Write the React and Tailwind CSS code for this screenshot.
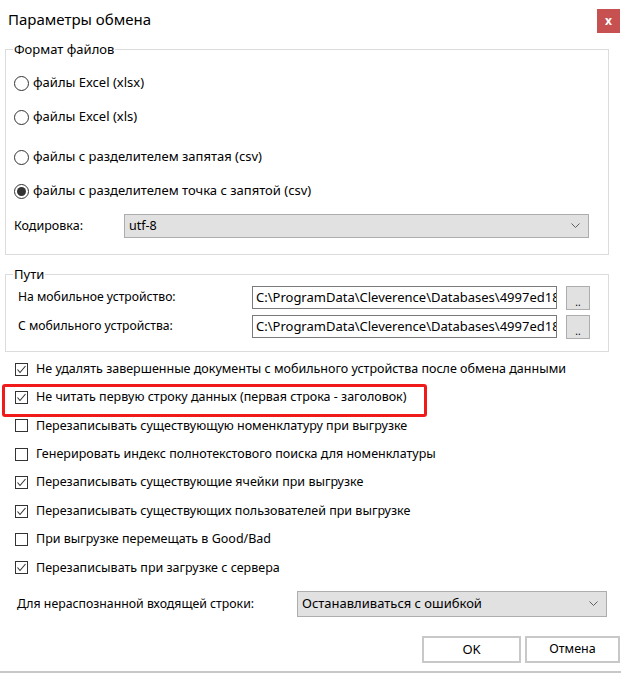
import React from "react";

const font = { fontFamily: '"Noto Sans", "DejaVu Sans", sans-serif' };

const Radio = ({ checked, label, className }) => (
    <div className={`flex items-center h-[20px] pl-[8px] ${className}`}>
        <span className="w-[15px] h-[15px] rounded-full border border-[#333333] bg-white flex items-center justify-center shrink-0">
            {checked && <span className="w-[9px] h-[9px] rounded-full bg-[#333333]" />}
        </span>
        <span className="ml-[4px] text-[13px] text-black">{label}</span>
    </div>
);

const Check = ({ checked, label }) => (
    <div className="flex items-center h-[28.4px] pl-[15px]">
        <span className="w-[13px] h-[13px] border border-[#333333] bg-white flex items-center justify-center shrink-0">
            {checked && (
                <svg width="11" height="11" viewBox="0 0 11 11">
                    <polyline points="1.5,5.5 4,8.5 9.5,2" fill="none" stroke="#333333" strokeWidth="1.1" />
                </svg>
            )}
        </span>
        <span className="ml-[8px] text-[12.5px] text-black whitespace-nowrap">{label}</span>
    </div>
);

const Chevron = () => (
    <svg width="9" height="6" viewBox="0 0 9 6">
        <polyline points="0.5,0.5 4.5,4.5 8.5,0.5" fill="none" stroke="#606060" strokeWidth="1" />
    </svg>
);

const PathRow = ({ label, className }) => (
    <div className={`flex items-center h-[23px] ${className}`}>
        <span className="w-[246px] pl-[12px] text-[12.2px] text-black">{label}</span>
        <div className="w-[305px] h-[23px] border border-[#7a7a7a] bg-white flex items-center pl-[3px]">
            <span className="block w-full overflow-hidden text-[13px] text-black whitespace-nowrap">
                C:\ProgramData\Cleverence\Databases\4997ed18
            </span>
        </div>
        <div className="ml-[9px] w-[24px] h-[24px] border border-[#adadad] bg-[#e1e1e1] flex items-end justify-center pb-[2px]">
            <span className="text-[10px] leading-[10px] text-black">..</span>
        </div>
    </div>
);

export default function App() {
    const checks = [
        { checked: true, label: "Не удалять завершенные документы с мобильного устройства после обмена данными" },
        { checked: true, label: "Не читать первую строку данных (первая строка - заголовок)" },
        { checked: false, label: "Перезаписывать существующую номенклатуру при выгрузке" },
        { checked: false, label: "Генерировать индекс полнотекстового поиска для номенклатуры" },
        { checked: true, label: "Перезаписывать существующие ячейки при выгрузке" },
        { checked: true, label: "Перезаписывать существующих пользователей при выгрузке" },
        { checked: false, label: "При выгрузке перемещать в Good/Bad" },
        { checked: true, label: "Перезаписывать при загрузке с сервера" },
    ];

    return (
        <div className="w-[621px] h-[673px] bg-white flex flex-col overflow-hidden" style={font}>
            {/* title bar */}
            <div className="h-[41px] flex justify-between shrink-0">
                <span className="pl-[8px] pt-[9px] text-[15px] leading-[20px] text-black">Параметры обмена</span>
                <div className="mt-[9px] mr-[1px] w-[23px] h-[24px] bg-[#c75050] flex items-center justify-center">
                    <span className="text-white text-[12px] font-bold leading-none">x</span>
                </div>
            </div>

            {/* format group */}
            <fieldset className="ml-[5px] w-[604px] h-[214px] border border-[#dcdcdc] shrink-0">
                <legend className="ml-[7px] px-[1px] text-[13px] leading-[16px] text-black">Формат файлов</legend>
                <Radio label="файлы Excel (xlsx)" className="mt-[16px]" />
                <Radio label="файлы Excel (xls)" className="mt-[14px]" />
                <Radio label="файлы с разделителем запятая (csv)" className="mt-[20px]" />
                <Radio checked label="файлы с разделителем точка с запятой (csv)" className="mt-[14px]" />
                <div className="flex items-center mt-[13px] pl-[8px]">
                    <span className="w-[110px] text-[12.5px] text-black">Кодировка:</span>
                    <div className="w-[465px] h-[24px] border border-[#adadad] bg-[#e1e1e1] flex items-center justify-between pl-[4px] pr-[8px]">
                        <span className="text-[12.5px] text-black">utf-8</span>
                        <Chevron />
                    </div>
                </div>
            </fieldset>

            {/* paths group */}
            <fieldset className="mt-[11px] ml-[5px] w-[604px] h-[86px] border border-[#dcdcdc] shrink-0">
                <legend className="ml-[7px] px-[1px] text-[13px] leading-[16px] text-black">Пути</legend>
                <PathRow label="На мобильное устройство:" className="mt-[4px]" />
                <PathRow label="С мобильного устройства:" className="mt-[6px]" />
            </fieldset>

            {/* checkboxes */}
            <div className="relative mt-[3px] shrink-0">
                {checks.map((c) => (
                    <Check key={c.label} checked={c.checked} label={c.label} />
                ))}
                <div className="absolute left-[2px] top-[29px] w-[425px] h-[33px] border-[3px] border-[#f01a1a] rounded-[3px]" />
            </div>

            {/* unrecognized row */}
            <div className="flex items-center mt-[9px] shrink-0">
                <span className="w-[297px] pl-[17px] text-[12.3px] text-black">Для нераспознанной входящей строки:</span>
                <div className="w-[310px] h-[26px] border border-[#adadad] bg-[#e1e1e1] flex items-center justify-between pl-[4px] pr-[8px]">
                    <span className="text-[13px] text-black">Останавливаться с ошибкой</span>
                    <Chevron />
                </div>
            </div>

            {/* buttons */}
            <div className="flex justify-end gap-[4px] mt-[19px] pr-[1px] shrink-0">
                <button className="w-[99px] h-[27px] border-2 border-[#c8c8c8] bg-white text-[13px] text-black">OK</button>
                <button className="w-[95px] h-[27px] border-2 border-[#c8c8c8] bg-white text-[12.5px] text-black">Отмена</button>
            </div>

            <div className="mt-auto h-[2px] bg-[#c8c8c8] shrink-0" />
        </div>
    );
}
